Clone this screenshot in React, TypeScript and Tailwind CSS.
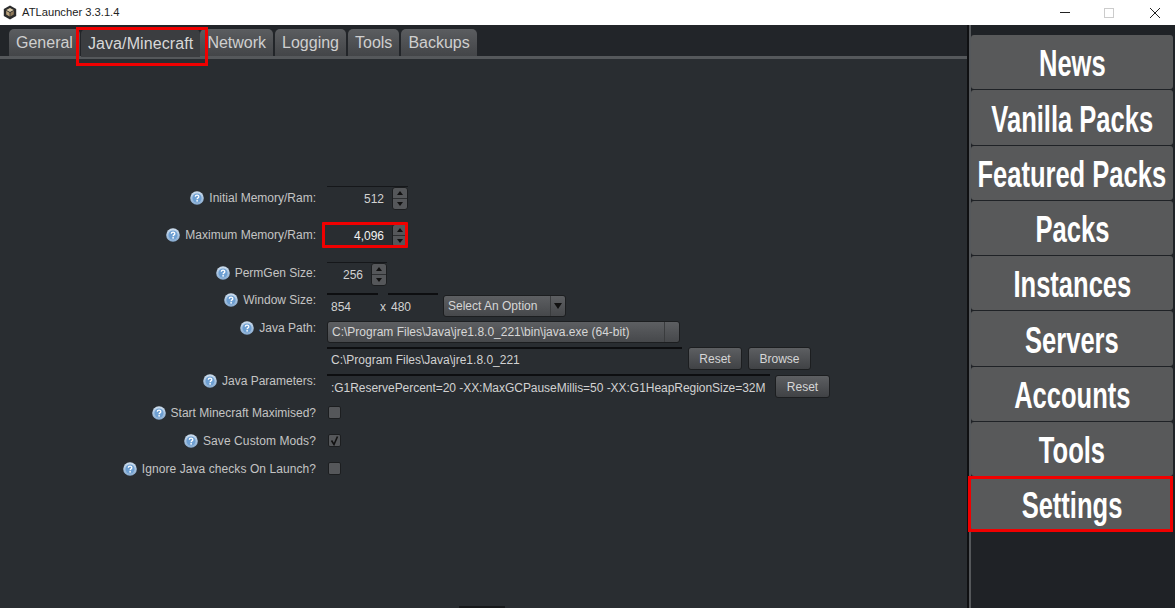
import { ReactNode } from 'react';

const tabs = ['General', 'Java/Minecraft', 'Network', 'Logging', 'Tools', 'Backups'];
const navItems = ['News', 'Vanilla Packs', 'Featured Packs', 'Packs', 'Instances', 'Servers', 'Accounts', 'Tools', 'Settings'];

function HelpIcon() {
  return (
    <svg width="14" height="14" viewBox="0 0 14 14" className="shrink-0">
      <defs>
        <linearGradient id="help" x1="0" y1="0" x2="0" y2="1">
          <stop offset="0" stopColor="#cfdfef" />
          <stop offset="1" stopColor="#86aad0" />
        </linearGradient>
      </defs>
      <circle cx="7" cy="7" r="6.8" fill="url(#help)" />
      <circle cx="7" cy="7" r="4.6" fill="#6d9fd2" />
      <path d="M5.3 5.8c0-2.2 3.5-2.2 3.5-.1 0 1.2-1.7 1.2-1.7 2.5" fill="none" stroke="#fff" strokeWidth="1.3" />
      <circle cx="7.1" cy="9.8" r=".9" fill="#fff" />
    </svg>
  );
}

function Logo() {
  return (
    <svg width="14" height="15" viewBox="0 0 14 15" className="shrink-0">
      <path d="M7 .5 13.2 4v7L7 14.5.8 11V4Z" fill="#2b2b2b" />
      <path d="M7 3 10.8 5 7 7 3.2 5Z" fill="#d8c9a8" />
      <path d="M3.2 5.8 6.6 7.7v3.8L3.2 9.6Z" fill="#b9a27c" />
      <path d="M10.8 5.8 7.4 7.7v3.8l3.4-1.9Z" fill="#8f7a5a" />
    </svg>
  );
}

function Row({ label, top, height, labelClass, children }: { label?: string; top?: string; height: string; labelClass?: string; children: ReactNode }) {
  return (
    <div className={`flex gap-[11px] ${height}`}>
      <div className={`flex w-[316px] justify-end ${top}`}>
        {label && (
          <div className={`flex h-[14px] items-center gap-[5px] text-[12px] text-[#c4c4c4] ${labelClass}`}>
            <HelpIcon />
            <span>{label}</span>
          </div>
        )}
      </div>
      <div className="flex items-start">{children}</div>
    </div>
  );
}

function Spinner({ value, width, boxed }: { value: string; width: string; boxed?: boolean }) {
  return (
    <div className={`relative flex h-[24px] border-t border-[#15171a] ${width}`}>
      <div className={`flex flex-1 items-center justify-end pr-[8px] text-[12px] ${boxed ? 'text-[#f2f2f2]' : 'text-[#d2d2d2]'}`}>{value}</div>
      <div className="flex w-[16px] flex-col overflow-hidden rounded-[3px] border border-[#1c1e20] bg-[#55575a]">
        <div className="flex flex-1 items-center justify-center border-b border-[#2d2f31]">
          <div className="size-0 border-x-[3px] border-b-[4px] border-x-transparent border-b-[#111]" />
        </div>
        <div className="flex flex-1 items-center justify-center">
          <div className="size-0 border-x-[3px] border-t-[4px] border-x-transparent border-t-[#111]" />
        </div>
      </div>
      {boxed && <div className="absolute -top-[2px] right-0 -left-[5px] h-[26px] rounded-[1px] border-[3px] border-[#f00000]" />}
    </div>
  );
}

function Button({ label, width }: { label: string; width: string }) {
  return (
    <div className={`flex h-[23px] items-center justify-center rounded-[3px] border border-[#1c1e20] bg-gradient-to-b from-[#5d5f62] to-[#404245] text-[12px] text-[#d6d6d6] ${width}`}>
      {label}
    </div>
  );
}

function Check({ checked }: { checked?: boolean }) {
  return (
    <div className="mt-[4px] ml-[1px] flex size-[13px] items-center justify-center rounded-[2px] border border-[#1c1e20] bg-[#55575a]">
      {checked && (
        <svg width="11" height="11" viewBox="0 0 11 11">
          <path d="M2.5 5.5 5 9.5 8.5 1.5" fill="none" stroke="#111" strokeWidth="1.6" />
        </svg>
      )}
    </div>
  );
}

export default function App() {
  return (
    <div className="flex h-[608px] w-[1175px] flex-col overflow-hidden bg-[#292d31] font-['Liberation_Sans',sans-serif]">
      <div className="flex h-[25px] shrink-0 items-center bg-white pl-[3px] text-[11.2px] text-[#222]">
        <Logo />
        <span className="ml-[5px]">ATLauncher 3.3.1.4</span>
        <div className="ml-auto flex items-center">
          <div className="mr-[34px] h-[1px] w-[10px] bg-[#222]" />
          <div className="mr-[36px] size-[10px] border border-[#ccc]" />
          <svg width="10" height="10" viewBox="0 0 10 10" className="mr-[15px]">
            <path d="M0 0 10 10M10 0 0 10" stroke="#222" strokeWidth="1" />
          </svg>
        </div>
      </div>

      <div className="flex min-h-0 flex-1">
        <div className="flex w-[967px] shrink-0 flex-col">
          <div className="relative flex h-[34px] border-b-[3px] border-[#55585b] bg-[#222529] pt-[4px] pl-[9px]">
            {tabs.map((tab) => (
              <div
                key={tab}
                className={
                  tab === 'Java/Minecraft'
                    ? 'relative -ml-[1px] flex h-[28px] items-center rounded-t-[5px] bg-[#3b3d40] px-[7px] pt-[1px] text-[16px] tracking-[0.1px] text-[#d8d8d8]'
                    : 'mr-[2px] flex h-[27px] items-center rounded-t-[5px] bg-gradient-to-b from-[#5b5d60] to-[#434548] px-[7px] pt-[1px] text-[16px] text-[#cfcfcf]'
                }
              >
                {tab}
                {tab === 'Java/Minecraft' && <div className="absolute -top-[2px] -right-[8px] -left-[5px] h-[39px] border-[3px] border-[#f00000]" />}
              </div>
            ))}
          </div>

          <div className="flex-1 pt-[127px]">
            <Row label="Initial Memory/Ram:" top="pt-[5px]" height="h-[37px]">
              <Spinner value="512" width="w-[81px]" />
            </Row>
            <Row label="Maximum Memory/Ram:" top="pt-[5px]" height="h-[39px]">
              <Spinner value="4,096" width="w-[81px]" boxed />
            </Row>
            <Row label="PermGen Size:" top="pt-[4px]" height="h-[31px]">
              <Spinner value="256" width="w-[60px]" />
            </Row>
            <Row label="Window Size:" top="pt-[0px]" height="h-[28px]">
              <div className="flex h-[24px] w-[51px] items-center border-t-2 border-[#0d0e10] pt-[1px] pl-[4px] text-[12px] text-[#d2d2d2]">854</div>
              <div className="flex h-[24px] w-[10px] items-center justify-center pt-[3px] text-[12px] text-[#d2d2d2]">x</div>
              <div className="flex h-[24px] w-[50px] items-center border-t-2 border-[#0d0e10] pt-[1px] pl-[3px] text-[12px] text-[#d2d2d2]">480</div>
              <div className="mt-[2px] ml-[5px] flex h-[22px] w-[123px] items-center rounded-[3px] border border-[#1c1e20] bg-gradient-to-b from-[#5d5f62] to-[#46484b] pl-[4px] text-[12px] text-[#d6d6d6]">
                <span className="flex-1">Select An Option</span>
                <div className="flex h-full w-[15px] items-center justify-center border-l border-[#3a3c3e]">
                  <div className="size-0 border-x-[4px] border-t-[6px] border-x-transparent border-t-[#111]" />
                </div>
              </div>
            </Row>
            <Row label="Java Path:" top="pt-[0px]" height="h-[26px]">
              <div className="flex h-[22px] w-[353px] items-center rounded-[3px] border border-[#1c1e20] bg-gradient-to-b from-[#5d5f62] to-[#46484b] pl-[4px] text-[12px] text-[#d6d6d6]">
                <span className="flex-1">C:\Program Files\Java\jre1.8.0_221\bin\java.exe (64-bit)</span>
                <div className="h-full w-[15px] border-l border-[#3a3c3e]" />
              </div>
            </Row>
            <Row height="h-[27px]">
              <div className="flex h-[24px] w-[355px] items-center border-t-2 border-[#0d0e10] pl-[4px] text-[12px] text-[#d2d2d2]">C:\Program Files\Java\jre1.8.0_221</div>
              <div className="ml-[6px] flex gap-[6px]">
                <Button label="Reset" width="w-[54px]" />
                <Button label="Browse" width="w-[63px]" />
              </div>
            </Row>
            <Row label="Java Parameters:" top="pt-[0px]" height="h-[28px]">
              <div className="flex h-[25px] w-[443px] items-center overflow-hidden border-t-2 border-[#0d0e10] pl-[4px] text-[12px] tracking-[-0.04px] whitespace-nowrap text-[#d2d2d2]">:G1ReservePercent=20 -XX:MaxGCPauseMillis=50 -XX:G1HeapRegionSize=32M</div>
              <div className="mt-[1px] ml-[5px]">
                <Button label="Reset" width="w-[55px]" />
              </div>
            </Row>
            <Row label="Start Minecraft Maximised?" top="pt-[4px]" height="h-[28px]">
              <Check />
            </Row>
            <Row label="Save Custom Mods?" top="pt-[4px]" height="h-[28px]" labelClass="tracking-[0.1px]">
              <Check checked />
            </Row>
            <Row label="Ignore Java checks On Launch?" top="pt-[4px]" height="h-[28px]" labelClass="tracking-[0.07px]">
              <Check />
            </Row>
          </div>
          <div className="ml-[459px] h-[2px] w-[46px] shrink-0 bg-[#16181a]" />
        </div>

        <div className="flex w-[208px] shrink-0 border-l-2 border-[#0f1012]">
          <div className="flex w-[206px] shrink-0 flex-col gap-[1px] border-l-2 border-[#55585b] bg-[#1f2226] pt-[10px] pr-[2px]">
            {navItems.map((item) => (
              <div
                key={item}
                className="relative flex h-[54.25px] w-full shrink-0 items-center justify-center rounded-[3px] bg-[#58595a] pt-[4px] text-[37px] font-bold text-white"
              >
                <span className="shrink-0 scale-x-[0.69] whitespace-nowrap">{item}</span>
                {item === 'Settings' && <div className="absolute -top-[1px] right-0 -bottom-[1px] -left-[3px] border-[3px] border-[#f00000]" />}
              </div>
            ))}
          </div>
        </div>
      </div>
    </div>
  );
}
